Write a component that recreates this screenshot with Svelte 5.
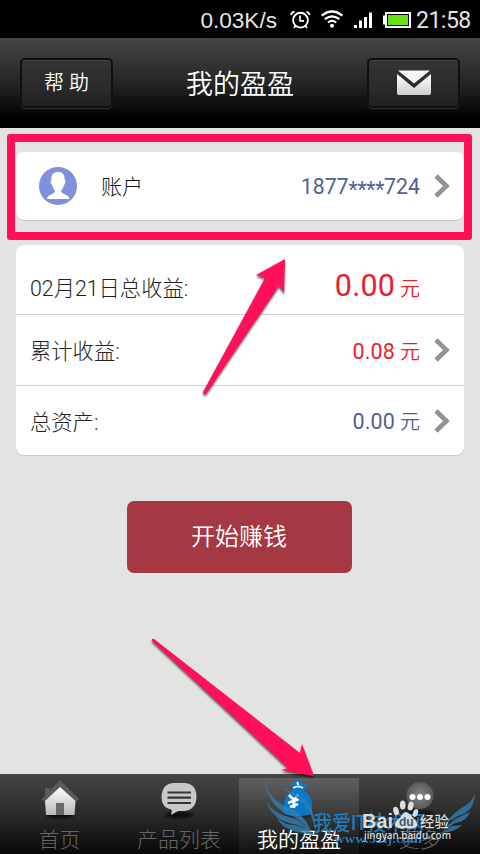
<script lang="ts">
  const rows = [
    { label: "02月21日总收益:", amount: "0.00", color: "red", big: true, link: false },
    { label: "累计收益:", amount: "0.08", color: "red", big: false, link: true },
    { label: "总资产:", amount: "0.00", color: "blue", big: false, link: true },
  ];

  const tabs = [
    { id: "home", label: "首页" },
    { id: "list", label: "产品列表" },
    { id: "mine", label: "我的盈盈" },
    { id: "more", label: "更多" },
  ];

  let current = "mine";
</script>

{#snippet chevron()}
  <svg class="chevron" width="18" height="26" viewBox="0 0 18 26">
    <path d="M3 3 L13.5 13 L3 23" fill="none" stroke="#929292" stroke-width="4.6" />
  </svg>
{/snippet}

<main class="screen">
  <div class="status">
    <span class="speed">0.03K/s</span>
    <svg class="status-icons" width="115" height="22" viewBox="297 9 115 22">
      <g fill="none" stroke="#fff">
        <circle cx="300.5" cy="20.2" r="7.4" stroke-width="1.9" />
        <path d="M300 15.5 V20.8 H304" stroke-width="1.7" />
        <path d="M291 15 Q291.500 12.500 294.500 11.700 M306.500 11.700 Q309 12.500 309.800 15 M295.500 26 L294 28 M305.500 26 L307 28" stroke-width="1.8" />
        <path d="M321.700 15.700 Q332 7.300 342.400 15.700 M324.800 19.200 Q332 13.500 339.400 19.200 M328 22.500 Q332 19.400 336.200 22.500" stroke-width="2.2" />
      </g>
      <g fill="#fff">
        <circle cx="332" cy="25.700" r="2" />
        <path d="M354 25h3v3h-3z M359 20.500h3V28h-3z M364 17h3v11h-3z M369 12.500h3V28h-3z" />
        <path d="M383 15.500h3v9h-3z" />
      </g>
      <path d="M386 13h24v14h-24z" fill="#000" stroke="#fff" stroke-width="2" />
      <path d="M388 15h20v10h-20z" fill="#68df17" />
    </svg>
    <span class="clock">21:58</span>
  </div>

  <header>
    <button class="head-button"><span>帮 助</span></button>
    <h1>我的盈盈</h1>
    <button class="head-button" aria-label="消息">
      <svg width="34" height="26" viewBox="0 0 34 26">
        <defs>
          <linearGradient id="mail" x1="0" y1="0" x2="0" y2="1">
            <stop offset="0" stop-color="#fff" />
            <stop offset="1" stop-color="#cecece" />
          </linearGradient>
        </defs>
        <path d="M0 4 L17 18 L34 4 V23 Q34 25 32 25 H2 Q0 25 0 23Z" fill="url(#mail)" />
        <path d="M1 .5 H33 L17 13.500Z" fill="#f6f6f6" />
      </svg>
    </button>
  </header>

  <section class="content">
    <div class="card account">
      <svg class="avatar" width="38" height="38" viewBox="0 0 38 38">
        <circle cx="19" cy="19" r="19" fill="#7f91dc" />
        <path d="M19 5 C14 5 12 8 12.500 13 C11 13 11.500 17 13.200 18 C14 21 15 22.500 16 23.500 C16 28 8 27 8 32 H30.500 C30.500 27 22 28 22 23.500 C23.500 22.500 24.300 20.500 25 18 C26.500 17 27 13 25.600 13 C26 8 24 5 19 5Z" fill="#fff" />
      </svg>
      <span class="account-label">账户</span>
      <span class="phone">1877<i>****</i>724</span>
      {@render chevron()}
    </div>

    <div class="card totals">
      {#each rows as row}
        <div class="row" class:first={row.big}>
          <span class="label">{row.label}</span>
          <span class="amount {row.color}"><b class:big={row.big}>{row.amount}</b> 元</span>
          {#if row.link}
            {@render chevron()}
          {/if}
        </div>
      {/each}
    </div>

    <button class="start">开始赚钱</button>
  </section>

  <nav>
    {#each tabs as tab}
      <button class="tab" class:active={tab.id === current} on:click={() => (current = tab.id)}>
        <svg class="tab-icon" width="44" height="44" viewBox="0 0 44 44">
          <defs>
            <linearGradient id="silver-{tab.id}" x1="0" y1="0" x2="0" y2="1">
              <stop offset="0" stop-color="#fff" />
              <stop offset="1" stop-color="#b7b7b7" />
            </linearGradient>
            <radialGradient id="ball-{tab.id}">
              <stop offset="0" stop-color="#858585" />
              <stop offset="1" stop-color="#5a5a5a" />
            </radialGradient>
            <filter id="soft-{tab.id}"><feGaussianBlur stdDeviation="1" /></filter>
          </defs>
          {#if tab.id === "home"}
            <ellipse cx="22" cy="36" rx="14" ry="3" fill="#080808" filter="url(#soft-home)" />
            <path d="M3.500 20.500 L22 1 L41 20 L37 23 L22 9 L8 23Z M7 18 V9 H12 V13Z" fill="#5b5b5b" />
            <path d="M22 8 L37.500 22 L36.500 36 H8 L7 22Z" fill="url(#silver-home)" />
            <path d="M18 24h8v12h-8z" fill="#686868" />
          {:else if tab.id === "list"}
            <ellipse cx="22" cy="36" rx="14" ry="3" fill="#080808" filter="url(#soft-list)" />
            <path d="M16 4 H28 Q39.500 5 39.500 18 Q39 31 27 32 H21 L14 36 L15 31 Q4.500 29 4.500 18 Q5 5 16 4Z" fill="#c8c8c8" />
            <path d="M10.500 13.500 H34 M10.500 18.700 H34 M10.500 24 H34" stroke="#343434" stroke-width="2.200" />
          {:else if tab.id === "mine"}
            <ellipse cx="21" cy="36" rx="14" ry="3" fill="#1b1b1b" filter="url(#soft-mine)" />
            <path d="M17 9 Q13 6 16 4 Q21 -2 25 4 Q32 4 29 9 L26 11 Q35 16 35 26 V33 Q34 37 21 37 Q8 37 7 34 Q5 17 16 11Z" fill="#0879cd" />
            <path d="M16 9 Q21 6 26 9 M20 3 L21.500 6" fill="none" stroke="#d9edf6" stroke-width="2" />
            <path d="M12 16 L17 21 L21 16 M11 24 L22 20 M13 28 L21 25 M17 21 V29" fill="none" stroke="#fff" stroke-width="2.600" />
          {:else}
            <ellipse cx="22" cy="34" rx="14" ry="3" fill="#171717" filter="url(#soft-more)" />
            <circle cx="22" cy="16.500" r="13.500" fill="url(#ball-more)" />
            <g fill="#fff">
              <circle cx="14.500" cy="18" r="3" />
              <circle cx="22" cy="18" r="3" />
              <circle cx="29.500" cy="18" r="3" />
            </g>
          {/if}
        </svg>
        <span>{tab.label}</span>
      </button>
    {/each}
  </nav>

  <div class="highlight"></div>

  <svg class="overlay" width="480" height="854" viewBox="0 0 480 854">
    <!-- site mark with wings -->
    <g class="wings" fill="#337eb0" opacity=".8">
      <path d="M263 777 C268 795 273 800 289 808 Q304 813 312 833 Q300 818 287 814 Q269 806 263 777Z" />
      <path d="M266 801 Q273 814 290 817 Q303 820 312 834 Q302 825 289 823 Q272 818 266 801Z" />
      <path d="M276 816 Q283 825 294 825 Q305 827 314 835 Q298 833 291 830 Q280 826 276 816Z" />
      <path d="M282 787 L303 798 Q314 806 317 834 Q310 808 302 802Z" />
      <path d="M475 794 Q474 812 458 816 L445 824 Q454 812 463 807 Q470 804 475 794Z" />
      <path d="M470 812 Q466 822 455 823 L442 832 Q450 822 457 818Z" />
      <path d="M462 825 Q456 832 440 833 Q449 829 452 826Z" />
    </g>
    <g fill="#2582c6" opacity=".9">
      <text class="site" x="313" y="830" textLength="111" lengthAdjust="spacingAndGlyphs">我爱IT技术网</text>
      <text class="site-url" x="334" y="843" textLength="88" lengthAdjust="spacingAndGlyphs">www.52ij.com</text>
    </g>
    <g fill="#ddd">
      <text class="baidu" x="362" y="828" textLength="31" lengthAdjust="spacingAndGlyphs">Bai</text>
      <ellipse cx="396" cy="811" rx="2.800" ry="4.300" transform="rotate(-12 396 811)" />
      <ellipse cx="402.700" cy="805" rx="2.800" ry="4.500" />
      <ellipse cx="410.700" cy="806" rx="2.800" ry="4.500" transform="rotate(15 410.700 806)" />
      <ellipse cx="415.500" cy="813" rx="2.500" ry="4" transform="rotate(20 415.500 813)" />
      <path d="M406 812 Q410 813 413 818 Q418 822 417 826 Q414 830 406 828 Q399 830 395 826 Q394 822 400 818 Q403 812 406 812Z" />
      <text class="du" x="399" y="826" fill="#355b73">du</text>
      <text class="jingyan" x="420" y="827" textLength="29" lengthAdjust="spacingAndGlyphs">经验</text>
      <text class="jingyan-url" x="364" y="839" textLength="87" lengthAdjust="spacingAndGlyphs">jingyan.baidu.com</text>
    </g>

    <!-- pointers -->
    <g class="arrows" fill="#ff1058">
      <path d="M285 259 L256 275 L265 278 L203 392 Q203 395 206 394 L279 286 L284 293Z" />
      <path d="M314 776 L302 744 L300 753 L154 639 Q151 638 152 641 L288 768 L281 770Z" />
    </g>
  </svg>
</main>

<style>
  :global(body) {
    margin: 0;
  }

  .screen {
    position: relative;
    display: flex;
    flex-direction: column;
    width: 480px;
    height: 854px;
    overflow: hidden;
    background: #e2e4e1;
    font-family: Roboto, "Noto Sans CJK SC", sans-serif;
    font-weight: 300;
  }

  button {
    border: 0;
    padding: 0;
    font: inherit;
  }

  .status {
    display: flex;
    justify-content: flex-end;
    box-sizing: border-box;
    height: 38px;
    padding-right: 9px;
    color: #e4e4e4;
    background: #000;
    line-height: 42px;
    font-weight: 400;
  }

  .speed {
    font-family: "Liberation Sans", sans-serif;
    margin-right: 20px;
    font-size: 22.6px;
  }

  .status-icons {
    margin: 9px 4px 0 0;
    overflow: visible;
  }

  .clock {
    width: 55px;
    font-size: 23px;
    letter-spacing: -0.5px;
  }

  header {
    display: flex;
    flex: 0 0 90px;
    justify-content: space-between;
    box-sizing: border-box;
    padding: 20px 20px 0;
    background: linear-gradient(#454545, #252525 50%, #000 90%);
    color: #fff;
  }

  .head-button {
    display: flex;
    align-items: center;
    justify-content: center;
    box-sizing: border-box;
    width: 93px;
    height: 50px;
    border: 2px solid #101010;
    border-radius: 5px;
    background: linear-gradient(#353535, #222);
    box-shadow: 0 1px 1px #333, inset 0 1px #444;
    color: #fff;
    font-size: 20px;
    font-weight: 350;
  }

  .head-button span {
    margin-bottom: 3px;
  }

  h1 {
    margin: 0;
    font-size: 27px;
    line-height: 54px;
    font-weight: 350;
  }

  .content {
    display: flex;
    flex: 1;
    flex-direction: column;
    padding: 24px 16px 0;
  }

  .card {
    border-radius: 8px;
    background: #fff;
    box-shadow: 0 1px 1px #c6c8c6;
  }

  .account {
    display: flex;
    align-items: center;
    height: 68px;
    margin-bottom: 25px;
  }

  .avatar {
    margin-left: 23px;
  }

  .account-label {
    margin: 0 0 2px 24px;
    color: #111;
    font-size: 21px;
  }

  .phone {
    margin-left: auto;
    padding-top: 1px;
    color: #4d6194;
    font-size: 21.3px;
    font-weight: 400;
  }

  .phone i {
    font-style: normal;
    position: relative;
    top: 3px;
    letter-spacing: -0.3px;
  }

  .chevron {
    margin: 0 13px 0 13px;
  }

  .row {
    display: flex;
    align-items: center;
    height: 70px;
    border-top: 1px solid #cdcdcd;
  }

  .row:last-child {
    height: 69px;
  }

  .row.first {
    height: 69px;
    border-top: 0;
  }

  .first .label,
  .first .amount {
    padding-top: 14px;
  }

  .first .amount {
    padding-top: 12px;
    margin-right: 44px;
  }

  .label {
    margin: 0 0 1px 14px;
    color: #222;
    font-size: 21.3px;
  }

  .amount {
    margin-left: auto;
    font-size: 20px;
    font-weight: 350;
    white-space: pre;
  }

  .amount b {
    font-size: 21.5px;
    font-weight: 400;
    letter-spacing: 0.2px;
  }

  .amount .big {
    font-size: 30.5px;
  }

  .red {
    color: #e8202a;
  }

  .blue {
    color: #4d6194;
  }

  .start {
    align-self: center;
    box-sizing: border-box;
    width: 225px;
    height: 72px;
    margin: 46px 2px 0 0;
    padding-bottom: 5px;
    border-radius: 7px;
    background: #a43843;
    color: #fff;
    font-size: 24px;
    font-weight: 350;
  }

  nav {
    display: grid;
    grid-template-columns: 119px 120px 120px 121px;
    flex: 0 0 80px;
    background: linear-gradient(#454545, #2b2b2b 50%, #080808);
  }

  .tab {
    display: flex;
    flex-direction: column;
    align-items: center;
    box-sizing: border-box;
    height: 76px;
    margin-top: 4px;
    background: none;
    color: #666;
    font-size: 21px;
  }

  .tab-icon {
    flex: none;
    margin-top: 1px;
    overflow: visible;
  }

  .tab span {
    line-height: 28px;
    margin-top: 3px;
    white-space: nowrap;
  }

  .active {
    background: linear-gradient(#606060, #383838 50%, #111);
    color: #fff;
    font-weight: 350;
  }

  .highlight {
    position: absolute;
    top: 134px;
    left: 7px;
    box-sizing: border-box;
    width: 465px;
    height: 106px;
    border: 8px solid #ff1058;
    border-radius: 3px;
  }

  .overlay {
    position: absolute;
    inset: 0;
    pointer-events: none;
  }

  .arrows {
    filter: drop-shadow(0 2px 1px rgba(0, 0, 0, 0.6));
  }

  .site {
    font-size: 21px;
    font-weight: 500;
  }

  .site-url {
    font: bold 13px "Liberation Serif", serif;
  }

  .baidu {
    font: bold 20px "Liberation Sans", sans-serif;
  }

  .du {
    font: bold 12px "Liberation Sans", sans-serif;
  }

  .jingyan {
    font-size: 15px;
    font-weight: 500;
  }

  .jingyan-url {
    font: 500 10.5px "Noto Sans", sans-serif;
  }
</style>
